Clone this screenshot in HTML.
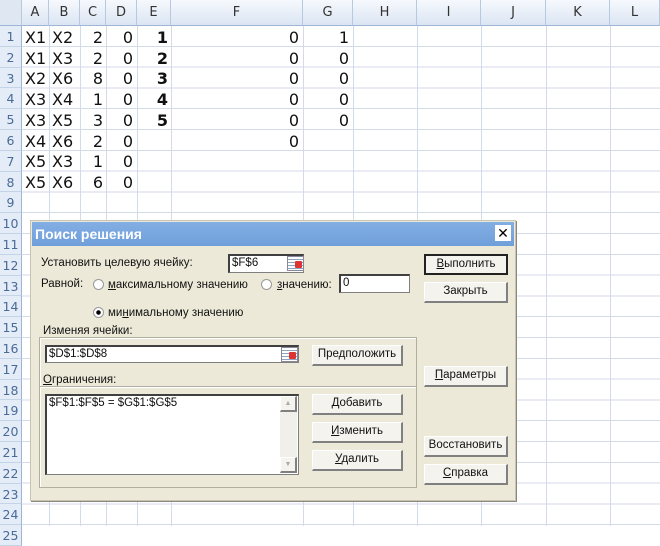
<!DOCTYPE html>
<html><head><meta charset="utf-8"><style>
*{margin:0;padding:0;box-sizing:border-box}
body{width:660px;height:526px;overflow:hidden;background:#fff;position:relative;font-family:"DejaVu Sans","Liberation Sans",sans-serif}
.a{position:absolute}
#grid{position:absolute;left:0;top:26px;width:660px;height:500px;background:repeating-linear-gradient(to bottom,transparent 0 19.8px,#d3dae8 19.8px 20.8px)}
.v{position:absolute;top:0;width:1px;height:526px;background:#d3dae8}
.hd{position:absolute;top:0;height:26px;background:linear-gradient(#f6f9fd,#dbe5f3);border-right:1px solid #b8c8df;border-bottom:1px solid #9eb6d6;color:#333;font-size:13px;text-align:center;line-height:26px}
.rl{position:absolute;left:0;width:22px;height:20.8px;background:#e4ecf7;border-right:1px solid #9eb6d6;border-bottom:1px solid #c5d3e6;color:#4a6a98;font-size:12.5px;text-align:center;line-height:21px}
.c{position:absolute;font-size:16px;line-height:21px;height:21px;color:#111;white-space:nowrap}
.r{text-align:right}
.b{font-weight:bold}
#dlg{position:absolute;left:30px;top:220px;width:486px;height:281px;background:#ece9d8;border:1px solid #c8c4b4;box-shadow:1px 1px 0 #8a887c;font-family:"Liberation Sans","DejaVu Sans",sans-serif;font-size:11.5px;color:#111}
#dlg .a{white-space:nowrap}
.title{left:1px;top:1px;width:482px;height:24px;background:linear-gradient(#83aee4,#6f9fda);color:#fff;font-weight:bold;font-size:14px;line-height:24px;padding-left:3px}
.x{right:4px;top:4px;width:16px;height:16px;background:#fff;color:#000;font-weight:bold;text-align:center;line-height:16px;font-size:14px}
.in{background:#fff;border:1px solid #7f7f7f;border-top:2px solid #404040;border-left:2px solid #404040;padding-left:2px;line-height:15px;font-size:11.5px}
.btn{background:#f4f3ee;border:1px solid #fff;border-right:2px solid #808080;border-bottom:2px solid #808080;text-align:center;line-height:17px;font-size:11.5px}
.def{border:2px solid #222;}
.rad{width:11px;height:11px;border-radius:50%;background:#fff;border:1px solid #999}
.grp{border:1px solid #b0ae9f;box-shadow:inset 1px 1px 0 #fff}
.lg{background:#ece9d8;padding:0 2px}
.ico{width:17px;height:15px;background:repeating-linear-gradient(#fff 0 2px,#8fa3c0 2px 3px);border:1px solid #889}
.ico::after{content:"";position:absolute;right:1px;top:4px;width:7px;height:7px;background:#d33;border-radius:1px}
</style></head><body>
<div id="grid"></div>
<div class="v" style="left:49px"></div><div class="v" style="left:80px"></div><div class="v" style="left:106px"></div><div class="v" style="left:137px"></div><div class="v" style="left:171px"></div><div class="v" style="left:303px"></div><div class="v" style="left:353px"></div><div class="v" style="left:417px"></div><div class="v" style="left:481px"></div><div class="v" style="left:546px"></div><div class="v" style="left:610px"></div>
<div class="hd" style="left:0;width:22px;background:#dfe7f3"></div>
<div class="hd" style="left:22px;width:27px">A</div><div class="hd" style="left:49px;width:31px">B</div><div class="hd" style="left:80px;width:26px">C</div><div class="hd" style="left:106px;width:31px">D</div><div class="hd" style="left:137px;width:34px">E</div><div class="hd" style="left:171px;width:132px">F</div><div class="hd" style="left:303px;width:50px">G</div><div class="hd" style="left:353px;width:64px">H</div><div class="hd" style="left:417px;width:64px">I</div><div class="hd" style="left:481px;width:65px">J</div><div class="hd" style="left:546px;width:64px">K</div><div class="hd" style="left:610px;width:50px">L</div>
<div class="rl" style="top:26px">1</div><div class="rl" style="top:46.8px">2</div><div class="rl" style="top:67.6px">3</div><div class="rl" style="top:88.4px">4</div><div class="rl" style="top:109.2px">5</div><div class="rl" style="top:130px">6</div><div class="rl" style="top:150.8px">7</div><div class="rl" style="top:171.6px">8</div><div class="rl" style="top:192.4px">9</div><div class="rl" style="top:213.2px">10</div><div class="rl" style="top:234px">11</div><div class="rl" style="top:254.8px">12</div><div class="rl" style="top:275.6px">13</div><div class="rl" style="top:296.4px">14</div><div class="rl" style="top:317.2px">15</div><div class="rl" style="top:338px">16</div><div class="rl" style="top:358.8px">17</div><div class="rl" style="top:379.6px">18</div><div class="rl" style="top:400.4px">19</div><div class="rl" style="top:421.2px">20</div><div class="rl" style="top:442px">21</div><div class="rl" style="top:462.8px">22</div><div class="rl" style="top:483.6px">23</div><div class="rl" style="top:504.4px">24</div><div class="rl" style="top:525.2px">25</div>

<div class="c" style="left:25px;top:27px">X1</div><div class="c" style="left:52px;top:27px">X2</div><div class="c r" style="left:80px;width:23px;top:27px">2</div><div class="c r" style="left:106px;width:27px;top:27px">0</div><div class="c r b" style="left:137px;width:31px;top:27px">1</div><div class="c r" style="left:171px;width:128px;top:27px">0</div><div class="c r" style="left:303px;width:46px;top:27px">1</div>
<div class="c" style="left:25px;top:48px">X1</div><div class="c" style="left:52px;top:48px">X3</div><div class="c r" style="left:80px;width:23px;top:48px">2</div><div class="c r" style="left:106px;width:27px;top:48px">0</div><div class="c r b" style="left:137px;width:31px;top:48px">2</div><div class="c r" style="left:171px;width:128px;top:48px">0</div><div class="c r" style="left:303px;width:46px;top:48px">0</div>
<div class="c" style="left:25px;top:68px">X2</div><div class="c" style="left:52px;top:68px">X6</div><div class="c r" style="left:80px;width:23px;top:68px">8</div><div class="c r" style="left:106px;width:27px;top:68px">0</div><div class="c r b" style="left:137px;width:31px;top:68px">3</div><div class="c r" style="left:171px;width:128px;top:68px">0</div><div class="c r" style="left:303px;width:46px;top:68px">0</div>
<div class="c" style="left:25px;top:89px">X3</div><div class="c" style="left:52px;top:89px">X4</div><div class="c r" style="left:80px;width:23px;top:89px">1</div><div class="c r" style="left:106px;width:27px;top:89px">0</div><div class="c r b" style="left:137px;width:31px;top:89px">4</div><div class="c r" style="left:171px;width:128px;top:89px">0</div><div class="c r" style="left:303px;width:46px;top:89px">0</div>
<div class="c" style="left:25px;top:110px">X3</div><div class="c" style="left:52px;top:110px">X5</div><div class="c r" style="left:80px;width:23px;top:110px">3</div><div class="c r" style="left:106px;width:27px;top:110px">0</div><div class="c r b" style="left:137px;width:31px;top:110px">5</div><div class="c r" style="left:171px;width:128px;top:110px">0</div><div class="c r" style="left:303px;width:46px;top:110px">0</div>
<div class="c" style="left:25px;top:131px">X4</div><div class="c" style="left:52px;top:131px">X6</div><div class="c r" style="left:80px;width:23px;top:131px">2</div><div class="c r" style="left:106px;width:27px;top:131px">0</div><div class="c r" style="left:171px;width:128px;top:131px">0</div>
<div class="c" style="left:25px;top:151px">X5</div><div class="c" style="left:52px;top:151px">X3</div><div class="c r" style="left:80px;width:23px;top:151px">1</div><div class="c r" style="left:106px;width:27px;top:151px">0</div>
<div class="c" style="left:25px;top:172px">X5</div><div class="c" style="left:52px;top:172px">X6</div><div class="c r" style="left:80px;width:23px;top:172px">6</div><div class="c r" style="left:106px;width:27px;top:172px">0</div>

<div id="dlg">
<div class="a title">Поиск решения</div>
<div class="a x">✕</div>
<div class="a" style="left:10px;top:36px">Установить целевую ячейку:</div>
<div class="a in" style="left:197px;top:33px;width:76px;height:19px">$F$6</div>
<div class="a ico" style="left:256px;top:35px"></div>
<div class="a btn def" style="left:393px;top:33px;width:84px;height:21px"><u>В</u>ыполнить</div>
<div class="a" style="left:10px;top:57px">Равной:</div>
<div class="a rad" style="left:62px;top:58px"></div>
<div class="a" style="left:77px;top:58px"><u>м</u>аксимальному значению</div>
<div class="a rad" style="left:230px;top:58px"></div>
<div class="a" style="left:246px;top:58px"><u>з</u>начению:</div>
<div class="a in" style="left:308px;top:53px;width:71px;height:19px">0</div>
<div class="a btn" style="left:393px;top:61px;width:84px;height:21px">Закрыть</div>
<div class="a rad" style="left:62px;top:86px;background:radial-gradient(circle,#000 0 2px,#fff 2.5px)"></div>
<div class="a" style="left:77px;top:86px">ми<u>н</u>имальному значению</div>
<div class="a grp" style="left:8px;top:116px;width:378px;height:50px"></div>
<div class="a lg" style="left:10px;top:104px">Изменяя ячейки:</div>
<div class="a in" style="left:14px;top:124px;width:254px;height:18px">$D$1:$D$8</div>
<div class="a ico" style="left:250px;top:126px"></div>
<div class="a btn" style="left:281px;top:124px;width:91px;height:21px">Предположить</div>
<div class="a grp" style="left:8px;top:165px;width:378px;height:102px"></div>
<div class="a lg" style="left:10px;top:153px"><u>О</u>граничения:</div>
<div class="a in" style="left:14px;top:173px;width:254px;height:81px;line-height:15px">$F$1:$F$5 = $G$1:$G$5</div>
<div class="a" style="left:249px;top:175px;width:17px;height:77px;background:#f0efea"></div>
<div class="a btn" style="left:249px;top:175px;width:17px;height:16px;font-size:7px;color:#aaa;line-height:13px">▲</div>
<div class="a btn" style="left:249px;top:236px;width:17px;height:16px;font-size:7px;color:#aaa;line-height:13px">▼</div>
<div class="a btn" style="left:281px;top:173px;width:91px;height:21px">Добавить</div>
<div class="a btn" style="left:281px;top:201px;width:91px;height:21px"><u>И</u>зменить</div>
<div class="a btn" style="left:281px;top:229px;width:91px;height:21px"><u>У</u>далить</div>
<div class="a btn" style="left:393px;top:145px;width:84px;height:21px"><u>П</u>араметры</div>
<div class="a btn" style="left:393px;top:215px;width:84px;height:21px">Восстановить</div>
<div class="a btn" style="left:393px;top:243px;width:84px;height:21px"><u>С</u>правка</div>
</div>
</body></html>
